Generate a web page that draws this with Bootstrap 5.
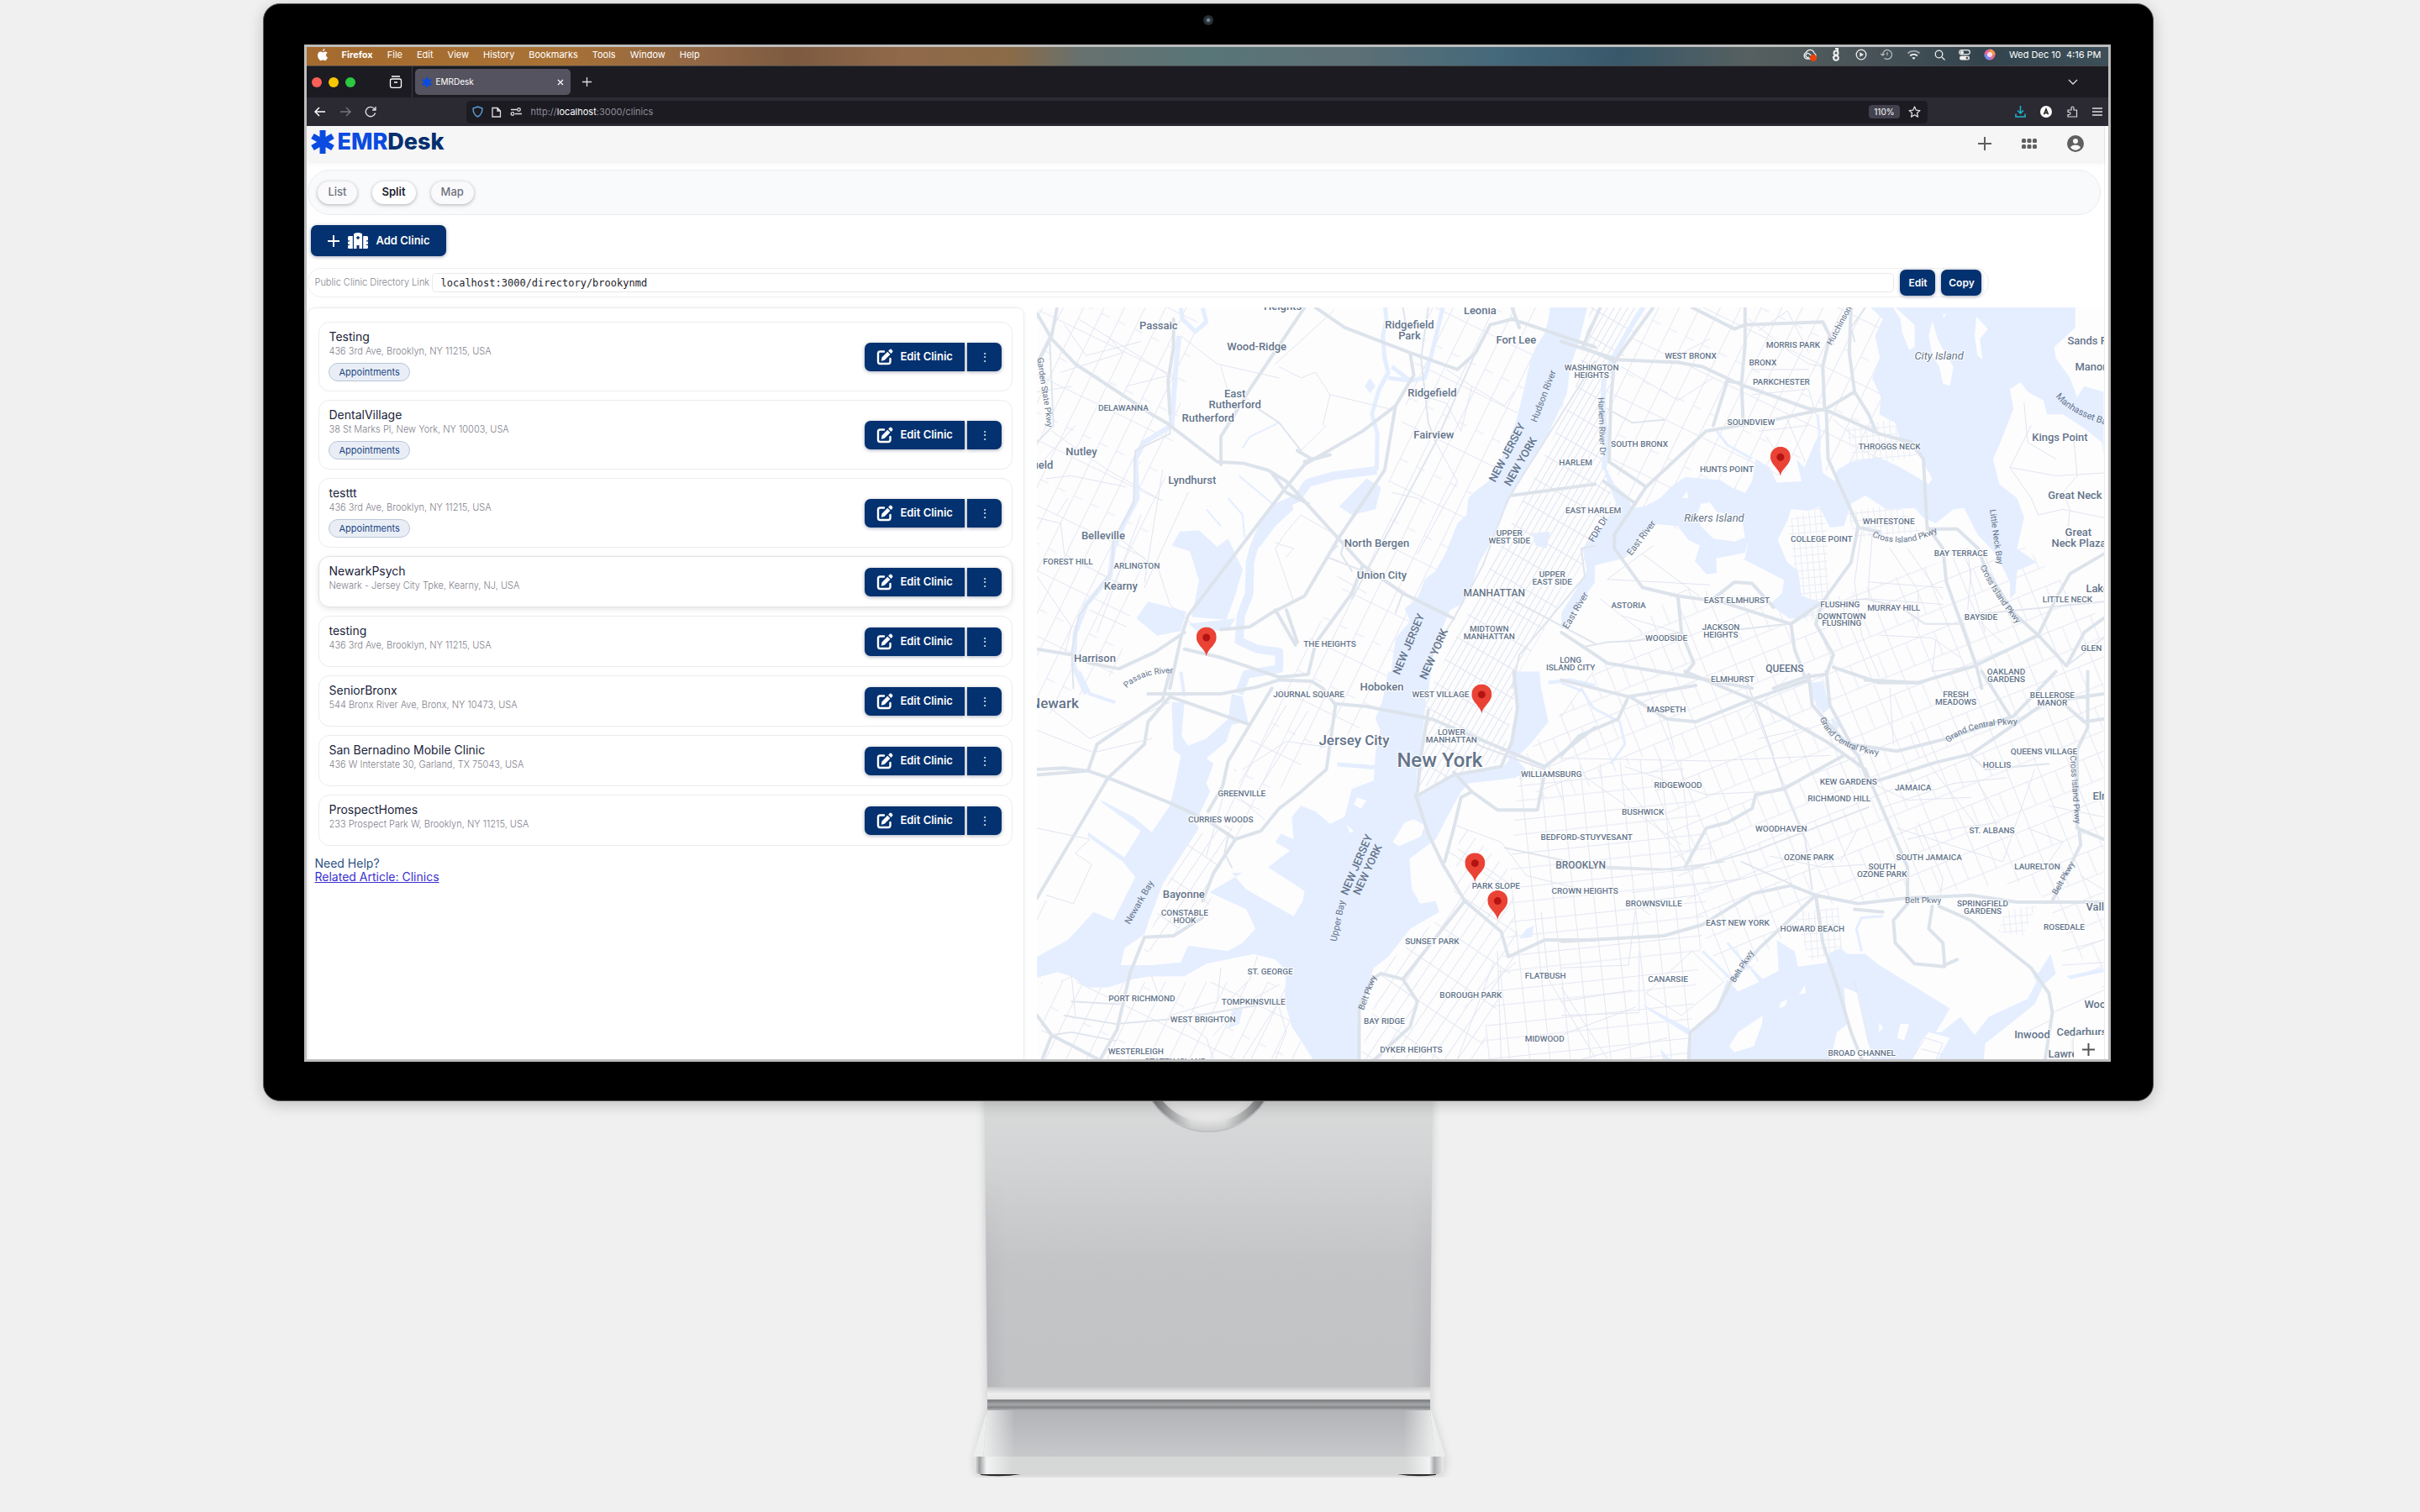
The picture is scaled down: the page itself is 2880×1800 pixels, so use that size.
<!DOCTYPE html>
<html lang="en">
<head>
<meta charset="utf-8">
<meta name="viewport" content="width=device-width, initial-scale=1">
<title>EMRDesk – Clinics</title>
<link href="https://cdn.jsdelivr.net/npm/bootstrap@5.3.0/dist/css/bootstrap.min.css" rel="stylesheet">
<style>
:root{--navy:#04316f;--line:#ebecef;--ink:#20243a}
body{background:#f0f0f0;font-family:Inter,"Liberation Sans",sans-serif;color:var(--ink);overflow-x:hidden}
button{font-family:inherit}
svg{display:block;flex:none}
.stage{padding-top:4px;padding-right:4px}
.monitor{width:78.2%;aspect-ratio:2252/1308;background:#000;border:1px solid #555;border-radius:20px;padding:48px 50px 46px 48px;position:relative;z-index:1;box-shadow:0 4px 18px rgba(0,0,0,.2)}
.cam{top:13px;left:50%;width:12px;height:12px;margin-left:-6px;background:radial-gradient(circle,#7d96a6 0 1px,#2a3438 3px,#22272a)}
.screen{border:3px solid #bdbdbd;background:#fff;overflow:hidden}
.macbar{height:23px;font-size:11px;line-height:19px;padding:0 8px 4px 12px;color:#fff;border-bottom:1px solid #4a4a4c;background:linear-gradient(90deg,#a56a2d 0,#a87135 14%,#916746 22%,#7d5a40 27%,#90694a 33%,#8b6b48 39%,#66716e 43%,#587578 50%,#5d7076 58%,#44697a 66%,#38586a 73%,#56605f 80%,#4a555a 86%,#33444d 93%,#3d4f59)}
.macbar a{color:#fff;text-decoration:none}
.macmenus{gap:17px;margin-left:15px}
.macstatus{gap:16px}
.clock{white-space:pre}
.tabs{height:37px;background:#1c1b22;padding-left:6px}
.dot{width:12px;height:12px;border-radius:50%;margin-right:8px}
.d1{background:#ff5f57}.d2{background:#f8c600}.d3{background:#2bc840}
.bare{background:none;border:0;padding:0;color:inherit;line-height:1}
.fxview{margin-left:32px}
.tabsep{width:1px;background:#3a3944;margin:0 3px 0 11px}
.newtab{margin-left:14px}
.alltabs{margin-right:36px}
.tabchip{width:185px;height:31px;background:#55535f;border-radius:5px;color:#fff;font-size:10px;padding:0 8px}
.tools{height:34px;background:#2b2a33;color:#fbfbfe;padding:0 7px 0 9px}
.toolset{gap:17px}
.urlbox{height:27px;background:#1c1b22;border-radius:5px;margin-left:106px;margin-right:104px;font-size:11px;color:#8d8c95;padding:0 8px 0 7px;gap:10px}
.urlbox b{color:#fbfbfe;font-weight:400}
.zoomchip{background:#42414d;border-radius:4px;color:#fbfbfe;font-size:10px;height:16px;padding:0 6px}
.app{min-height:0;border-right:1px solid #ececec;margin-right:4px}
.apphead{height:42px;background:#f6f6f6;padding:0 24px 0 5px;color:#5f5f5f;box-shadow:0 2px 6px rgba(0,0,0,.07);position:relative}
.headtools{gap:36px}
.brandrow{padding-bottom:5px}
.brand{font-weight:800;font-size:27px;line-height:28px;color:#06306e;text-decoration:none;margin-left:3px}
.brand span{color:#0a4be0}
.strip{height:54px;border:1px solid #e9ecf0;background:#f9fafc;border-radius:28px;margin:10px 4px 0 1px;padding:0 11px;gap:18px}
.pill{height:27px;border:0;border-radius:14px;background:#fafafc;color:#70717f;font-size:13px;font-weight:500;padding:0 12px;box-shadow:0 1px 4px rgba(0,0,0,.3)}
.pill.on{background:#fff;color:#1b1d2c;font-weight:600}
.navy{background:var(--navy);color:#fff;border:0;font-weight:600;box-shadow:0 1px 4px rgba(0,20,60,.35)}
.add{height:37px;border-radius:7px;font-size:13px;margin:12px 0 0 5px;padding:0 19px}
.linkbar{height:35px;width:2001px;max-width:94%;border:1px solid #efeff1;border-radius:16px;margin:14px 0 0 1px;padding:0 8px 0 7px}
.linkbar label{font-size:11px;color:#85868f;font-weight:300;width:140px;white-space:nowrap}
.linkbar input{height:23px;border:1px solid #e8e9ec;border-radius:5px;font:12px "DejaVu Sans Mono",monospace;color:#22232b;padding:0 9px;min-width:0}
.sq{height:31px;border-radius:7px;font-size:12px;width:42px;margin-left:7px}
.sq.wide{width:48px}
.panes{margin:12px 0 0 1px;gap:15px;min-height:0}
.listpane{width:39.9%;border:1px solid var(--line);border-bottom:0;border-radius:9px 9px 0 0;padding:16px 13px 0 12px;box-shadow:0 0 6px rgba(0,0,0,.04)}
.clinic{border:1px solid var(--line);border-radius:13px;height:61px;margin-bottom:10px;padding:0 12px 0 11px}
.clinic.tall{height:83px}
.clinic.lift{box-shadow:0 2px 7px rgba(0,0,0,.1);border-color:#dfe1e5}
.info{padding-top:7px;align-self:flex-start}
.info h2{font-size:14px;line-height:20px;margin:0;font-weight:400}
.info p{font-size:11px;line-height:14px;margin:0;font-weight:300;color:#7f818c}
.tag{font-size:11px;line-height:20px;border:1px solid #b9c6da;background:#e9eef6;color:#1c4684;border-radius:11px;padding:0 11px;margin-top:7px;display:inline-block}
.ed{height:34px;font-size:13px;border-radius:7px 0 0 7px;width:119px;gap:8px}
.more{height:34px;width:41px;border-radius:0 7px 7px 0;margin-left:3px;font-size:12px;font-weight:300}
.help{margin:13px 0 0 -5px;font-size:14px;line-height:16px;color:#2c5282}
.help a{color:#3a2fd0}
.mapbox{flex-basis:0;background:#fdfdfe;border-radius:8px 0 0 0;overflow:hidden}
.mapbox>svg{width:100%;height:100%}
.w{fill:#e4eeff}.ld{fill:#fdfdfe}
.ws{fill:none;stroke:#e4eeff;vector-effect:non-scaling-stroke;stroke-linejoin:round}
.hw,.rd,.mn{fill:none;stroke:#dde3eb;vector-effect:non-scaling-stroke;stroke-linejoin:round;stroke-linecap:round}
.hw{stroke-width:4}.rd{stroke-width:2;stroke:#e0e5ed}.mn{stroke-width:1;stroke:#e2e5f0}
.lb{font-family:Roboto,"Liberation Sans",sans-serif;fill:#64748b;text-anchor:middle;paint-order:stroke;stroke:#fff;stroke-width:2px;stroke-linejoin:round}
.tn{font-size:13px;font-weight:500}.nb{font-size:10px;font-weight:500}.bo{font-size:12px;font-weight:500}.rv{font-size:11px;stroke:none}.st{font-size:13px;stroke:none;font-weight:500}
.pk{font-size:10px}.city{font-size:17px;font-weight:500}.metro{font-size:24px}
.isl{font-style:italic;font-weight:400}
.s{text-anchor:start}
.zin{width:36px;height:29px;background:#fff;border-radius:6px 0 0 0;right:0;bottom:0;box-shadow:0 0 4px rgba(0,0,0,.2);padding-top:10px}
.stand{width:616px;height:488px;margin-top:-40px}
</style>
<script src="https://cdn.jsdelivr.net/npm/bootstrap@5.3.0/dist/js/bootstrap.bundle.min.js"></script>
</head>
<body>
<svg width="0" height="0" class="position-absolute" aria-hidden="true">
<symbol id="edit" viewBox="0 0 20 20"><path d="M9 3.5H4.5A2.500 2.500 0 0 0 2 6v9.500a2.500 2.500 0 0 0 2.500 2.500H14a2.500 2.500 0 0 0 2.500-2.500V12" fill="none" stroke="#fff" stroke-width="2.400" stroke-linecap="round"/><path d="M6.500 10.500 13.200 3.700l3.200 3.200-6.700 6.800-4 1zM14.200 2.700 15.600 1.300a1.800 1.800 0 0 1 2.600 0l.6.6a1.800 1.800 0 0 1 0 2.600l-1.400 1.400z" fill="#fff"/></symbol>
<symbol id="star" viewBox="0 0 28 28"><path d="M14 0v28M2 7l24 14M26 7l-24 14" stroke="#0a4be0" stroke-width="7"/></symbol>
<symbol id="pin" viewBox="0 0 24 35"><path d="M12 35C11 26 0 22 0 12a12 12 0 0 1 24 0C24 22 13 26 12 35z" fill="#ea4335"/><circle cx="12" cy="12.500" r="4.500" fill="#b31412"/></symbol>
</svg>
<div class="stage d-flex flex-column align-items-center">
<div class="monitor d-flex flex-column">
 <div class="cam position-absolute rounded-circle"></div>
 <div class="screen d-flex flex-column flex-grow-1">
  <nav class="macbar d-flex align-items-center" aria-label="Menu bar">
   <svg width="14" height="15" viewBox="0 0 14 15" fill="#fff"><path d="M9.500 0c.1 1.600-1.100 3-2.500 3C6.900 1.600 8.100.2 9.500 0zM7.200 4.200c.6 0 1.500-.8 2.800-.8 1 0 2 .5 2.600 1.500-2.300 1.400-1.900 4.500.4 5.400-.6 1.700-1.700 3.900-3.100 3.900-1 0-1.300-.6-2.500-.6s-1.600.6-2.500.6C3.200 14.200 1 10.600 1 7.800c0-2.700 1.700-4.200 3.400-4.200 1.200 0 2.100.6 2.800.6z"/></svg>
   <div class="macmenus d-flex"><a href="#" class="fw-bold">Firefox</a><a href="#">File</a><a href="#">Edit</a><a href="#">View</a><a href="#">History</a><a href="#">Bookmarks</a><a href="#">Tools</a><a href="#">Window</a><a href="#">Help</a></div>
   <div class="macstatus d-flex align-items-center ms-auto">
    <svg width="17" height="15" viewBox="0 0 17 15" fill="none" stroke="#eee" stroke-width="1.300"><path d="M5 12a4 4 0 0 1-.5-7.500A5 5 0 0 1 14 5a4 4 0 0 1 0 7H5zM8 10a2.500 2.500 0 1 1 0-4l4 3.500"/><circle cx="13" cy="11" r="4" fill="#e8430a" stroke="none"/></svg>
    <svg width="14" height="16" viewBox="0 0 14 16" fill="none" stroke="#eee" stroke-width="2"><circle cx="7" cy="6" r="2.500"/><circle cx="7" cy="12" r="2.800"/><path d="M6 1h3v3M3 11h2"/></svg>
    <svg width="14" height="14" viewBox="0 0 14 14"><circle cx="7" cy="7" r="5.800" fill="none" stroke="#eee" stroke-width="1.300"/><path d="M5.300 4.200v5.600L10 7z" fill="#eee"/></svg>
    <svg width="15" height="14" viewBox="0 0 15 14" fill="none" stroke="#b8bcbf" stroke-width="1.200"><path d="M2.500 7a5.500 5.500 0 1 1 2 4.200M0 6l2.500 2L5 6M8 4v4"/></svg>
    <svg width="17" height="13" viewBox="0 0 17 13" fill="none" stroke="#eee" stroke-width="1.800"><path d="M1.500 4.500a10 10 0 0 1 14 0" stroke="#9aa4a8"/><path d="M4.200 7.500a6 6 0 0 1 8.600 0"/><path d="m8.500 12-2-2.200a3 3 0 0 1 4 0z" fill="#eee" stroke="none"/></svg>
    <svg width="13" height="13" viewBox="0 0 13 13" fill="none" stroke="#eee" stroke-width="1.300"><circle cx="5.500" cy="5.500" r="4.300"/><path d="m9 9 3.500 3.500"/></svg>
    <svg width="14" height="13" viewBox="0 0 14 13"><rect x=".7" y=".7" width="12.600" height="5" rx="2.500" fill="none" stroke="#eee" stroke-width="1.300"/><circle cx="4" cy="3.200" r="2" fill="#eee"/><rect x="1" y="7.500" width="12" height="5" rx="2.500" fill="#eee"/><circle cx="10" cy="10" r="1.500" fill="#555"/></svg>
    <svg width="14" height="14" viewBox="0 0 14 14"><circle cx="7" cy="7" r="6.500" fill="#e3679b"/><path d="M7 .5A6.500 6.500 0 0 1 13.500 7L7 8z" fill="#f19a4a"/><path d="M.5 7A6.500 6.500 0 0 0 7 13.500L8 7z" fill="#6f8df5"/><circle cx="7" cy="7" r="3" fill="#f8dfe9"/></svg>
    <span class="clock">Wed Dec 10  4:16 PM</span>
   </div>
  </nav>
  <div class="tabs d-flex align-items-center flex-shrink-0">
   <span class="dot d1"></span><span class="dot d2"></span><span class="dot d3"></span>
   <button class="bare fxview" aria-label="Firefox View"><svg width="16" height="15" viewBox="0 0 16 15" fill="none" stroke="#fff" stroke-width="1.300"><rect x="1.500" y="4" width="13" height="10.300" rx="2"/><path d="M3 1h10M6 8h4"/></svg></button>
   <span class="tabsep align-self-stretch"></span>
   <div class="tabchip d-flex align-items-center"><svg width="12" height="12" class="me-1"><use href="#star"/></svg><span>EMRDesk</span><button class="bare ms-auto" aria-label="Close tab"><svg width="8" height="8" viewBox="0 0 8 8" stroke="#fff" stroke-width="1.200"><path d="m1 1 6 6M7 1 1 7"/></svg></button></div>
   <button class="bare newtab" aria-label="New tab"><svg width="11" height="11" viewBox="0 0 11 11" stroke="#ddd" stroke-width="1.300"><path d="M5.500 0v11M0 5.500h11"/></svg></button>
   <button class="bare alltabs ms-auto" aria-label="All tabs"><svg width="12" height="8" viewBox="0 0 12 8" fill="none" stroke="#ddd" stroke-width="1.300"><path d="m1 1 5 5 5-5"/></svg></button>
  </div>
  <div class="tools d-flex align-items-center flex-shrink-0">
   <button class="bare" aria-label="Back"><svg width="14" height="12" viewBox="0 0 14 12" fill="none" stroke="#fff" stroke-width="1.500"><path d="M13 6H1.500M6 1 1 6l5 5"/></svg></button>
   <button class="bare ms-3" aria-label="Forward"><svg width="14" height="12" viewBox="0 0 14 12" fill="none" stroke="#77767f" stroke-width="1.400"><path d="M1 6h11.500M8 1l5 5-5 5"/></svg></button>
   <button class="bare ms-3" aria-label="Reload"><svg width="15" height="14" viewBox="0 0 15 14" fill="none" stroke="#ddd" stroke-width="1.400"><path d="M12.500 8.500A5.700 5.700 0 1 1 11 3l1.500 1.500M13 1v4H9"/></svg></button>
   <div class="urlbox d-flex align-items-center flex-grow-1">
    <svg width="13" height="14" viewBox="0 0 13 14" fill="none" stroke="#5a9fd6" stroke-width="1.400"><path d="M6.500 1 12 3c0 5-1.500 8-5.500 10C2.500 11 1 8 1 3z"/></svg>
    <svg width="12" height="13" viewBox="0 0 12 13" fill="none" stroke="#ddd" stroke-width="1.300"><path d="M1 1.500h6L10.500 5v7H1zM7 1v4h4"/></svg>
    <svg width="14" height="10" viewBox="0 0 14 10" fill="none" stroke="#ddd" stroke-width="1.300"><path d="M1 2.500h7M6 7.500h8"/><circle cx="10.500" cy="2.500" r="1.800"/><circle cx="3" cy="7.500" r="1.800"/></svg>
    <div class="flex-grow-1" role="textbox" contenteditable="true" aria-label="Address">http://<b>localhost</b>:3000/clinics</div>
    <button class="bare zoomchip">110%</button>
    <button class="bare" aria-label="Bookmark"><svg width="15" height="14" viewBox="0 0 15 14" fill="none" stroke="#ddd" stroke-width="1.300" stroke-linejoin="round"><path d="m7.500 1 1.900 4.200 4.500.4-3.400 3 1 4.500-4-2.400-4 2.400 1-4.500-3.400-3 4.500-.4z"/></svg></button>
   </div>
   <div class="toolset d-flex align-items-center">
    <button class="bare" aria-label="Downloads"><svg width="13" height="14" viewBox="0 0 13 14" fill="none" stroke="#1fb6cf" stroke-width="1.500"><path d="M6.500 0v9M3 5.500 6.500 9 10 5.500M1 9.500V13h11V9.500"/></svg></button>
    <button class="bare" aria-label="Account"><svg width="14" height="14" viewBox="0 0 14 14"><circle cx="7" cy="7" r="7" fill="#fff"/><path d="M4.500 10.300 7 4l2.500 6.300M5.300 8.500h3.400" fill="none" stroke="#222" stroke-width="1.600"/></svg></button>
    <button class="bare" aria-label="Extensions"><svg width="14" height="14" viewBox="0 0 14 14" fill="none" stroke="#ddd" stroke-width="1.200"><path d="M2 5h4V2.500a1.500 1.500 0 0 1 3 0V5h3.500v8H2v-2.500h1.500a1.500 1.500 0 0 0 0-3H2z"/></svg></button>
    <button class="bare" aria-label="Menu"><svg width="12" height="10" viewBox="0 0 12 10" stroke="#ddd" stroke-width="1.300"><path d="M0 1h12M0 5h12M0 9h12"/></svg></button>
   </div>
  </div>
  <div class="app d-flex flex-column flex-grow-1">
   <header class="apphead d-flex align-items-center flex-shrink-0">
    <div class="brandrow d-flex align-items-center"><svg width="28" height="28"><use href="#star"/></svg><a class="brand" href="#"><span>EMR</span>Desk</a></div>
    <div class="headtools d-flex align-items-center ms-auto">
     <button class="bare" aria-label="Add"><svg width="16" height="16" viewBox="0 0 16 16" stroke="#5f5f5f" stroke-width="2"><path d="M8 0v16M0 8h16"/></svg></button>
     <button class="bare" aria-label="Apps"><svg width="18" height="12" viewBox="0 0 18 12" fill="#5f5f5f"><rect width="5" height="5" rx="1.500"/><rect x="6.500" width="5" height="5" rx="1.500"/><rect x="13" width="5" height="5" rx="1.500"/><rect y="7" width="5" height="5" rx="1.500"/><rect x="6.500" y="7" width="5" height="5" rx="1.500"/><rect x="13" y="7" width="5" height="5" rx="1.500"/></svg></button>
     <button class="bare" aria-label="Profile"><svg width="20" height="20" viewBox="0 0 20 20"><circle cx="10" cy="10" r="10" fill="#5f5f5f"/><circle cx="10" cy="7" r="3" fill="#f6f6f6"/><path d="M4 14.500c1.500-4 10.500-4 12 0a7.200 7.200 0 0 1-12 0z" fill="#f6f6f6"/></svg></button>
    </div>
   </header>
   <div class="strip d-flex align-items-center flex-shrink-0"><button class="pill">List</button><button class="pill on">Split</button><button class="pill">Map</button></div>
   <div class="flex-shrink-0"><button class="navy add d-flex align-items-center">
    <svg width="16" height="16" viewBox="0 0 16 16" stroke="#fff" stroke-width="2" class="me-2"><path d="M8 1v14M1 8h14"/></svg>
    <svg width="26" height="20" viewBox="0 0 26 20" fill="#fff" class="me-2"><path fill-rule="evenodd" d="M8 2q0-1 1-1.200L12 0h2l3 .8q1 .2 1 1.200v17h-3.500v-4h-3v4H8zM12.300 4v1.300H11v1.500h1.300V8h1.500V6.800h1.300V5.300h-1.300V4zM6.800 4v15H2.500A1.500 1.500 0 0 1 1 17.500V15h2v-1.200H1V10.500h2V9.300H1V5.500A1.500 1.500 0 0 1 2.500 4zM19.200 4v15h4.300a1.500 1.500 0 0 0 1.500-1.500V15h-2v-1.200h2v-3.300h-2V9.300h2V5.500A1.500 1.500 0 0 0 23.500 4z"/></svg>
    Add Clinic</button></div>
   <div class="linkbar d-flex align-items-center flex-shrink-0"><label for="dir" class="flex-shrink-0">Public Clinic Directory Link</label><input id="dir" class="flex-grow-1" value="localhost:3000/directory/brookynmd"><button class="navy sq">Edit</button><button class="navy sq wide">Copy</button></div>
   <main class="panes d-flex flex-grow-1">
    <section class="listpane flex-shrink-0">
     <article class="clinic tall d-flex align-items-center"><div class="info me-auto"><h2>Testing</h2><p>436 3rd Ave, Brooklyn, NY 11215, USA</p><span class="tag">Appointments</span></div><button class="navy ed d-flex align-items-center justify-content-center"><svg width="20" height="20"><use href="#edit"/></svg>Edit Clinic</button><button class="navy more" aria-label="More">⋮</button></article>
     <article class="clinic tall d-flex align-items-center"><div class="info me-auto"><h2>DentalVillage</h2><p>38 St Marks Pl, New York, NY 10003, USA</p><span class="tag">Appointments</span></div><button class="navy ed d-flex align-items-center justify-content-center"><svg width="20" height="20"><use href="#edit"/></svg>Edit Clinic</button><button class="navy more" aria-label="More">⋮</button></article>
     <article class="clinic tall d-flex align-items-center"><div class="info me-auto"><h2>testtt</h2><p>436 3rd Ave, Brooklyn, NY 11215, USA</p><span class="tag">Appointments</span></div><button class="navy ed d-flex align-items-center justify-content-center"><svg width="20" height="20"><use href="#edit"/></svg>Edit Clinic</button><button class="navy more" aria-label="More">⋮</button></article>
     <article class="clinic lift d-flex align-items-center"><div class="info me-auto"><h2>NewarkPsych</h2><p>Newark - Jersey City Tpke, Kearny, NJ, USA</p></div><button class="navy ed d-flex align-items-center justify-content-center"><svg width="20" height="20"><use href="#edit"/></svg>Edit Clinic</button><button class="navy more" aria-label="More">⋮</button></article>
     <article class="clinic d-flex align-items-center"><div class="info me-auto"><h2>testing</h2><p>436 3rd Ave, Brooklyn, NY 11215, USA</p></div><button class="navy ed d-flex align-items-center justify-content-center"><svg width="20" height="20"><use href="#edit"/></svg>Edit Clinic</button><button class="navy more" aria-label="More">⋮</button></article>
     <article class="clinic d-flex align-items-center"><div class="info me-auto"><h2>SeniorBronx</h2><p>544 Bronx River Ave, Bronx, NY 10473, USA</p></div><button class="navy ed d-flex align-items-center justify-content-center"><svg width="20" height="20"><use href="#edit"/></svg>Edit Clinic</button><button class="navy more" aria-label="More">⋮</button></article>
     <article class="clinic d-flex align-items-center"><div class="info me-auto"><h2>San Bernadino Mobile Clinic</h2><p>436 W Interstate 30, Garland, TX 75043, USA</p></div><button class="navy ed d-flex align-items-center justify-content-center"><svg width="20" height="20"><use href="#edit"/></svg>Edit Clinic</button><button class="navy more" aria-label="More">⋮</button></article>
     <article class="clinic d-flex align-items-center"><div class="info me-auto"><h2>ProspectHomes</h2><p>233 Prospect Park W, Brooklyn, NY 11215, USA</p></div><button class="navy ed d-flex align-items-center justify-content-center"><svg width="20" height="20"><use href="#edit"/></svg>Edit Clinic</button><button class="navy more" aria-label="More">⋮</button></article>
     <div class="help">Need Help?<br><a href="#">Related Article: Clinics</a></div>
    </section>
    <section class="mapbox flex-grow-1 position-relative" aria-label="Map">
<svg viewBox="1235 366 1271 896" preserveAspectRatio="xMidYMid slice">
<defs>
<pattern id="ga" width="30" height="7" patternUnits="userSpaceOnUse" patternTransform="rotate(-60)"><path d="M0 .5H30M.5 0V7" stroke="#e0e4f0" stroke-width="1" fill="none"/></pattern>
<pattern id="gb" width="24" height="40" patternUnits="userSpaceOnUse" patternTransform="rotate(-6)"><path d="M0 .5H24M.5 0V40M0 18H24" stroke="#e4e7f1" fill="none"/></pattern>
<pattern id="gc" width="44" height="13" patternUnits="userSpaceOnUse" patternTransform="rotate(-56)"><path d="M0 .5H44M.5 0V13" stroke="#e4e7f1" fill="none"/></pattern>
<pattern id="gd" width="36" height="52" patternUnits="userSpaceOnUse" patternTransform="rotate(-22)"><path d="M0 .5H36M.5 0V52M0 30H36M18 0V30" stroke="#e6e8f2" fill="none"/></pattern>
<pattern id="ge" width="70" height="22" patternUnits="userSpaceOnUse" patternTransform="rotate(-64)"><path d="M0 .5H70M.5 0V22M30 0V11" stroke="#e6e8f2" fill="none"/></pattern>
<pattern id="gf" width="7" height="9" patternUnits="userSpaceOnUse" patternTransform="rotate(-5)"><path d="M0 .5H7M.5 0V9" stroke="#e9ecf4" fill="none"/></pattern>
</defs>
<rect x="1235" y="366" width="1271" height="896" fill="#fdfdfe"/>
<!-- street grids -->
<path fill="url(#ga)" d="M1895 366 1875 470 1690 850 1690 940 1790 905 1810 800 1920 610 1910 480 1960 366z"/>
<path fill="url(#ge)" d="M1235 366H1430L1390 560 1330 800 1235 860zM1700 366H1840L1780 600 1650 850 1560 900 1470 1000 1450 950 1560 760 1640 640zM1240 1170H1530L1580 1262H1240z"/>
<path fill="url(#gc)" d="M1740 980 1800 1040 1810 1130 1760 1262H1620L1650 1150 1730 1080zM1410 1000 1470 980 1440 1080 1360 1140z"/>
<path fill="url(#gb)" d="M1810 920 2000 900 2040 1010 2010 1262H1760L1800 1100 1800 1020z"/>
<path fill="url(#gd)" d="M1800 920 1900 800 2000 700 2160 720 2400 640 2506 740V1180L2420 1050 2160 1080 2060 1180 2000 1050 1960 900 1850 960z"/>
<path fill="url(#ge)" d="M1900 500 1960 366H2250L2240 560 2130 560 2000 630 1950 620z"/>
<path fill="url(#gf)" d="M2130 620 2175 600 2180 740 2145 740zM2200 610 2260 600 2290 635 2210 640zM2200 510 2250 500 2290 540 2210 560zM2140 1090 2190 1080 2195 1135 2155 1145zM2390 1085 2425 1080 2410 1115 2380 1110z"/>
<!-- water -->
<g transform="translate(1220 360) scale(.4337 .33333)">
<path class="w" d="M1447 0 1440 60 1430 110 1405 160 1390 210 1375 300 1360 380 1350 430 1310 560 1275 640 1235 680 1220 700 1215 760 1190 790 1160 890 1130 960 1100 990 1080 1060 1045 1095 1060 1140 1020 1200 1010 1300 1000 1400H1110L1120 1280 1150 1160 1170 1100 1200 1080 1230 1010 1250 930 1290 840 1320 740 1340 690 1380 600 1430 500 1450 440 1490 330 1500 230 1524 140 1550 0z"/>
<path class="w" d="m480 815 50 60 30-30 40 110-20 90-25 90-95-10 20-130-25-105-50-20 22-50zM340 1070 445 1105 430 1175 365 1192 308 1130zM940 630 980 660 965 740 900 760 865 730zM950 270 965 300 950 325 935 300zM1395 825 1445 820 1435 880 1405 870zM450 1150 580 1130 560 1170 480 1180z"/>
<path class="ws" stroke-width="5" d="M990 0 995 60 985 120 990 200 1000 250 975 310 955 400 970 470 968 600M430 20 435 60 470 105 500 70 490 20M1010 230 1060 280 1100 270 1120 180 1150 18M1000 270 1060 280"/>
<path class="ws" stroke-width="10" d="M968 600 850 620 780 645 750 700 700 730 655 800 630 880 620 930 618 1040 595 1120 590 1210 640 1240 700 1250 700 1310 610 1330 590 1400"/>
<path class="w" d="M680 740 730 710 740 740 690 800 650 870 620 900 640 830z"/>
<path class="ws" stroke-width="6" d="M425 120 415 250 405 440 330 500 305 560 310 700 270 800 245 880 235 980 170 1080 140 1180 135 1300 170 1400"/>
<path class="ws" stroke-width="2" d="M600 520 620 480 700 430M560 700 600 760 605 840M590 620 700 740M500 740 540 800"/>
</g>
<g transform="translate(1860 360) scale(.4209 .33333)">
<path class="w" d="M860 0 910 60 888 120 902 200 880 270 905 340 900 400 945 430 960 500 1010 540 1050 630 1040 650 960 590 900 555 820 570 780 600 775 640 740 610 728 480 718 500 688 590 665 560 680 640 610 645 590 590 550 560 540 640 520 682 480 660 450 635 350 625 310 660 280 700 235 730 200 735 185 690 150 650 130 600 112 560 130 640 155 720 130 780 60 880 72 960 40 1030 0 1110V1170L60 1065 95 1000 95 940 180 915 230 830 262 792 330 800 360 850 392 870 378 925 410 972 440 968 438 915 500 908 630 993 625 1040 590 1080 645 1130 690 1130 730 1070 680 1050 670 960 640 930 612 850 640 780 650 740 700 745 730 730 760 805 800 800 820 720 860 690 920 740 1000 735 1025 770 1060 790 1110 740 1140 735 1178 830 1230 900 1270 1000 1270 1060 1285 1040 1290 960 1345 930 1290 880 1310 770 1290 700 1240 650 1222 560 1240 510 1280 380 1270 310 1300 285 1320 320 1365 350 1375 400 1420 400 1480 450 1530 500 1535 545V320L1480 300 1460 340 1440 270 1400 200 1395 160 1455 90 1455 0z"/>
<path class="w" d="M0 18H70L50 130 20 200 10 330 0 390z"/>
<path class="ws" stroke-width="6" d="M240 0 200 80 150 190 120 260 118 400 130 500 120 600"/>
<path class="ws" stroke-width="3" d="M440 460 470 510 540 560M725 400 730 460 730 520"/>
<path class="ld" d="M930 0 1000 80 1000 160 985 170 965 110 960 60zM1050 65 1065 130 1085 180 1110 230 1100 298 1080 290 1070 230 1050 190 1040 120zM1175 50 1208 95 1185 130 1192 205 1178 190 1170 120zM355 675 360 700 342 700zM395 720 420 715 440 750 510 765 520 840 490 855 430 845 395 800 385 760zM440 915 520 895 530 850 520 915 470 940zM1080 40 1090 45 1082 55z"/>
</g>
<g transform="translate(1220 800) scale(.4337 .33333)">
<path class="w" d="M1000 0 985 100 965 170 978 210 965 290 960 390 900 420 880 520 840 545 800 500 760 480 735 520 740 600 705 580 690 610 730 640 670 700 770 785 765 820 740 875 610 780 570 720 600 720 520 780 510 790 610 850 635 920 600 970 560 1000 450 980 430 1040 350 1050 265 1050 275 990 330 940 340 900 380 760 440 640 480 560 470 540 510 430 500 400 520 330 500 310 555 250 570 190 615 180 600 90 570 80 560 170 500 240 450 265 432 230 440 110 405 110 410 280 430 300 415 400 400 480 350 575 300 520 210 460 215 470 320 570 275 665 175 575 175 590 270 680 305 735 245 890 190 860 120 960 35 1020V1095L90 1075 130 1090 170 1130 230 1130 300 1100 350 1090 440 1090 500 1045 630 1010 690 1030 720 1070 715 1180 735 1270 800 1400H920L915 1200 950 1100 960 1060 1000 1020 1060 920 1140 860 1130 820 1090 830 1065 780 1058 670 1130 600 1170 500 1200 430 1220 400 1350 380 1378 350 1350 310 1390 260 1440 180 1420 60 1415 0H1350L1345 60 1355 130 1340 200 1330 320 1310 345 1200 360 1090 445 1075 440 1080 340 1090 290 1100 150 1110 0z"/>
<path class="w" d="M1380 920 1400 910 1395 950 1360 955zM570 1215 600 1205 590 1260 560 1275zM860 325 965 335 960 350 860 340z"/>
<path class="ws" stroke-width="4" d="M150 0 180 80 250 110M1568 50 1500 30 1440 40M430 0 440 90"/>
<path class="ld" d="M1045 540 1070 528 1100 550 1090 590 1030 625 1012 610zM915 450 940 462 925 490 905 475zM885 548 905 570 895 577zM640 710 690 740 770 790 760 820 700 790 650 740zM1070 770 1085 830 1100 800z"/>
</g>
<g transform="translate(1860 800) scale(.4209 .33333)">
<path class="w" d="M360 1400 372 1290 440 1200 470 1100 500 1145 560 1110 515 1030 570 1100 615 1070 610 960 640 985 660 1000 670 1055 750 1042 760 1005 790 990 810 1010 860 1010 900 1050 1100 1205 1060 1290 1075 1290 1130 1235 1170 1300 1210 1235 1320 1170 1345 1110 1330 1070 1290 1020 1350 1080 1385 1010 1400 1080 1365 1120 1340 1190 1270 1260 1200 1330 1195 1400z"/>
<path class="w" d="M230 1190 365 1280 360 1300 240 1205zM280 1350 320 1400H290zM705 40 740 35 760 130 740 150 710 90zM765 165 790 190 770 230zM1430 1090 1535 1060V1075L1440 1100z"/>
<path class="ws" stroke-width="3" d="M0 40 60 70 90 130 165 180 180 260 140 330M850 1000 835 920 850 880 910 875M400 1000 480 1100M470 970 530 1060"/>
<path class="ld" d="M570 1230 568 1260 545 1340 490 1362 475 1340 500 1290zM690 1120 692 1150 672 1155zM640 1170 635 1195 617 1205 620 1185zM800 1130 840 1150 870 1330 880 1400H760L780 1290 810 1260zM960 1260 985 1260 970 1320 950 1310zM1040 1290 1100 1310 1060 1400H990L1020 1320zM900 1255 912 1275 898 1290z"/>
<path class="mn" d="M1000 1370 1030 1310 1080 1330 1060 1390M1020 1350 1080 1370M830 1110 840 1160 870 1330"/>
</g>
<!-- roads -->
<g transform="translate(1220 360) scale(.4337 .33333)">
<path class="hw" d="M35 40 75 130 140 220 350 400 390 430 530 570 600 575 670 600 720 640 860 840 930 940 1040 1040 1180 1130M90 18 75 120 35 220M410 60 410 160 395 280 400 400M800 18 880 90 1060 180 1190 240 1240 180 1280 80 1340 60 1568 160M1340 18 1360 90M1060 180 1070 260 1020 370 990 600 860 850 770 1050 680 1110 620 1160 540 1170M1020 370 930 460 770 580 720 660 450 1120 430 1200 400 1380M770 18 620 310 540 480 540 580M680 610 720 680 780 720M750 530 790 560 840 545 770 570M930 940 900 1040 800 1220 780 1330 700 1340 540 1270 440 1240M35 1240 130 1260 180 1290 260 1310 360 1250 440 1180M690 1100 745 1225M720 1100 750 1215M1568 650 1340 690"/>
<path class="rd" d="M400 400 400 470 305 530 300 720 245 850 240 960 150 1120 130 1250 135 1380M1050 90 1040 18M1110 18 1090 200 1110 430 1130 500 1000 820 900 1060M1240 180 1130 500M1568 870 1530 880 1540 980 1360 1260 1340 1380M1180 1130 1260 940 1330 700 1568 210M860 870 830 910 930 960M880 850 870 900 900 960M1180 1130 1110 1280M1040 1040 1020 1110M1350 1070 1568 1220M35 500 80 440 70 140M630 370 700 430 760 530"/>
<path class="mn" d="M35 320 130 300M75 460 230 600 380 710M60 630 130 620 280 660M140 440 35 590M110 80 170 190 320 140M150 60 300 180 420 280M230 120 270 180 100 250M280 300 400 260M430 120 530 220 700 270M540 230 560 320 620 350M700 230 760 270 800 250 840 330 820 440M690 220 850 30M840 330 1000 380M830 440 760 530M450 680 330 1020M380 600 330 1000M240 820 370 960 400 1080 470 1160M320 760 200 1180M35 770 100 790 110 900 280 1020M860 980 940 1040M690 880 720 820 760 760 840 820M690 880 740 1070M690 860 740 880 720 910M1130 500 1190 640 1080 900M1160 240 1230 300 1200 460M1230 300 1320 370 1345 320M1010 680 1080 700 1100 720M1110 340 1160 360 1200 460M120 700 90 760M35 980 130 1160 110 1260M180 1100 280 1160"/>
</g>
<g transform="translate(1860 360) scale(.4209 .33333)">
<path class="hw" d="M0 140 160 205 330 215 400 230 500 290 700 380 750 385 900 470 990 500 1025 560 1035 800 1080 880 1090 1000 1175 1300 1190 1380M110 18 60 160 150 210 140 350 135 570 240 660 410 460 620 415 750 380 830 320 815 180 820 18M750 385 755 560 840 800 820 930 740 1070 650 1150 450 1070 330 1050 230 1020 150 880 150 830 240 660M520 18 520 150 510 290 515 440M370 18 490 95 520 80 740 70 760 120 740 230 745 380M510 290 470 280 430 440M830 320 870 400 890 460M150 210 260 18M840 805 900 820M1035 810 1120 810 1180 880 1200 950 1280 1110 1350 1190 1430 1300M650 1150 660 1240 690 1340 600 1380M740 1070 720 1150 770 1260 750 1330 690 1340M770 1305 900 1360 1010 1360 1170 1300 1350 1190 1400 1060 1440 970 1535 900M1430 1300 1480 1180 1535 1130M120 640 210 720M430 1060 490 1000 540 1005 600 1090M0 1180 60 1230 130 1290 370 1340 540 1380M330 1050 340 1180 375 1290 350 1330"/>
<path class="rd" d="M70 1230 110 1220 130 1215 210 1210 340 1180M500 1170 640 1150M740 1080 860 1060 960 1090 1030 1150 1140 1150M1140 1120 1535 1070M860 20 820 90 830 140M130 380 200 430 290 420M1430 1300 1535 1200"/>
<path class="mn" d="M530 60 640 170 700 220 740 230M540 240 700 240M560 100 640 30 700 180M170 230 330 350 430 270M300 210 420 130M540 330 700 310 720 400M560 460 700 440M580 480 620 560M640 420 690 570M770 420 830 480M850 820 830 1000 850 1190 900 1340M880 830 870 1000 1080 1020M930 880 1010 1030 1010 1160M980 880 1080 1060M1100 900 1150 880 1160 1000 1200 1180M870 1000 870 1060 1080 1080M1130 880 1160 960 1150 1100 1250 1220M900 1190 1050 1200 1130 1270M1060 1210 1050 1320 1170 1300M1310 360 1320 500 1400 560M1330 440 1270 590 1330 700 1350 760M1450 480 1460 620 1420 680 1440 740M1350 760 1420 740 1535 770M1440 740 1430 860 1535 880M1270 590 1400 620 1535 610M260 870 130 990 420 1010M230 900 390 1050M170 1120 330 1180M110 1060 230 1180"/>
</g>
<g transform="translate(1220 800) scale(.4337 .33333)">
<path class="hw" d="M35 350 110 345 175 355 230 380 400 470 500 530 580 600 650 570 700 490 760 430 830 350 855 120 820 60 790 35 700 30 640 55 540 80 340 80M35 370 175 355 200 260 380 100 400 0M230 380 330 260 340 180 400 90M230 380 35 810M400 90 620 190 680 60M620 190 560 320 545 410 505 500M580 600 520 720 490 820M855 115 940 125 1120 170 1430 340 1568 200M1075 440 1110 580 1150 690 1210 820 1310 930 1330 1020 1430 960 1568 960M1085 440 1180 370 1310 340 1340 250 1355 130 1345 0M1110 140 1090 300 1080 430M1180 360 1230 430 1300 495 1410 495 1430 360M1230 430 1200 450 1180 560 1155 680M1210 820 1040 1100 980 1080 955 1100 920 1200 920 1385M1040 1100 1080 1180 1060 1270 960 1390M490 880 410 945 330 950 290 1080 255 1280 210 1385M35 1230 75 1300 200 1385M75 1300 50 1385"/>
<path class="rd" d="M75 1300 130 1290 250 1320M560 590 550 650 570 700M130 1180 260 1190M110 1230 250 1260 430 1240 700 1180M1160 200 1260 270 1430 350M1320 630 1568 700"/>
<path class="mn" d="M35 210 190 290 350 240M60 120 180 240 400 110M720 120 590 400M780 140 640 430M830 270 720 250 600 350M590 450 660 530M550 430 500 660M35 560 180 600 140 650 185 690 135 830 60 800M60 820 30 900M100 1110 130 1090 140 1230M350 1090 370 1160 400 1180M640 1020 620 1100 560 1180M700 1120 600 1190 520 1300M540 1060 530 1180 400 1230M430 1240 500 1310 520 1385M700 1180 660 1260 600 1385M700 1200 720 1290 690 1385M1185 550 1310 610 1380 730 1568 790M1160 640 1310 760M1300 1000 1310 1380M1420 860 1440 1100 1568 1380M1350 1040 1210 1200M1290 1040 1190 1385"/>
</g>
<g transform="translate(1860 800) scale(.4209 .33333)">
<path class="hw" d="M0 30 190 90 380 50M190 90 160 170 50 230 0 300M200 95 300 170 380 180 480 130 540 100 700 30M350 0 540 100 750 250 860 350 980 700 980 800M700 10 710 120 780 220 840 300M750 0 760 120 820 260 950 285 1090 240 1280 160 1400 0M840 300 870 400 1060 325 1160 295 1270 200 1370 110 1535 80M860 30 1010 40M1190 0 1270 160M1400 90 1480 180 1535 170M1490 0 1490 200 1460 280 1460 560 1535 600M1465 560 1470 620 1390 820M800 300 700 370 630 420 550 440 540 490 470 540 410 560 350 700M0 965 290 945 400 905 540 795 650 765 720 800 840 830 980 810 1160 800 1290 825 1535 825M720 800 560 990 480 1110 440 1210 365 1290 360 1385M720 800 740 970 780 1120 820 1290 850 1385M830 850 910 860M980 830 940 890 945 970 1000 1045 1085 1055M1050 840 1040 920 1080 970 1085 1050 1120 1030M1070 840 1160 890 1330 1060 1380 1150 1390 1220 1370 1385"/>
<path class="rd" d="M0 690 350 710 550 640 870 485M0 700 280 710 460 680M510 680 650 760M600 310 630 420 690 600 710 780M1460 560 1460 440M1160 300 1200 350 1380 330M520 20 600 300"/>
<path class="mn" d="M0 310 420 320 760 300M180 340 410 440 560 430M60 370 340 620M170 390 350 680M90 0 0 160M300 180 320 280M560 240 700 200M640 20 520 170M930 60 940 260M990 180 1040 330 1180 560M880 400 980 460 1160 450M900 490 1110 400 1260 380M950 560 1250 680 1340 350M980 600 1120 560 1240 540M1240 520 1180 400M400 780 660 690M200 790 520 740M180 830 380 800M250 870 200 820M590 660 740 700 860 690M790 680 840 560M1010 540 1080 740 1070 830M1320 560 1420 610 1380 680M1535 520 1380 480M1470 730 1535 780M0 1060 190 1050 210 850M0 1180 200 1140M0 1230 220 1220 220 1000M240 1150 340 1230 460 1110 370 1000 240 1150M130 1385 0 1130M60 1385 300 1310M0 1300 210 1200M1390 1220 1535 1140M1420 1050 1535 1040M1300 1300 1380 1250M1420 1000 1535 960"/>
</g>
<!-- towns -->
<g class="lb tn"><text x="1380" y="392">Passaic</text><text x="1528" y="369">Heights</text><text x="1763" y="374">Leonia</text><text x="1497" y="417">Wood-Ridge</text><text x="1679" y="391">Ridgefield</text><text x="1679" y="404">Park</text><text x="1806" y="409">Fort Lee</text><text x="1471" y="473">East</text><text x="1471" y="486">Rutherford</text><text x="1439" y="502">Rutherford</text><text x="1706" y="472">Ridgefield</text><text x="1708" y="522">Fairview</text><text x="1288" y="542">Nutley</text><text x="1223" y="558">Bloomfield</text><text x="1420" y="576">Lyndhurst</text><text x="1314" y="642">Belleville</text><text x="1335" y="702">Kearny</text><text x="1640" y="651">North Bergen</text><text x="1646" y="689">Union City</text><text x="1304" y="789">Harrison</text><text x="1646" y="823">Hoboken</text><text x="1410" y="1070">Bayonne</text><text class="s" x="2463" y="410">Sands Point</text><text class="s" x="2472" y="441">Manorhaven</text><text x="2454" y="525">Kings Point</text><text x="2472" y="594">Great Neck</text><text x="2476" y="638">Great</text><text class="s" x="2444" y="651">Neck Plaza</text><text class="s" x="2485" y="705">Lake Success</text><text class="s" x="2493" y="953">Elmont</text><text class="s" x="2485" y="1085">Valley Stream</text><text class="s" x="2483" y="1201">Woodmere</text><text x="2421" y="1237">Inwood</text><text class="s" x="2450" y="1234">Cedarhurst</text><text class="s" x="2440" y="1260">Lawrence</text>
<text class="isl" x="2310" y="428">City Island</text><text class="isl" x="2042" y="621">Rikers Island</text></g>
<g class="lb city"><text x="1256" y="844">Newark</text><text x="1613" y="888">Jersey City</text><text class="metro" x="1715" y="914">New York</text></g>
<g class="lb bo"><text x="1780" y="710">MANHATTAN</text><text x="2126" y="801">QUEENS</text><text x="1883" y="1035">BROOKLYN</text></g>
<!-- neighbourhoods -->
<g class="lb nb"><text x="1338" y="489">DELAWANNA</text><text x="1272" y="672">FOREST HILL</text><text x="1354" y="677">ARLINGTON</text><text x="1584" y="771">THE HEIGHTS</text><text x="1896" y="441">WASHINGTON</text><text x="1896" y="450">HEIGHTS</text><text x="1877" y="554">HARLEM</text><text x="1898" y="611">EAST HARLEM</text><text x="1798" y="638">UPPER</text><text x="1798" y="647">WEST SIDE</text><text x="1849" y="687">UPPER</text><text x="1849" y="696">EAST SIDE</text><text x="1774" y="753">MIDTOWN</text><text x="1774" y="762">MANHATTAN</text><text x="1871" y="790">LONG</text><text x="1871" y="799">ISLAND CITY</text><text x="1716" y="831">WEST VILLAGE</text><text x="1559" y="831">JOURNAL SQUARE</text><text x="1729" y="876">LOWER</text><text x="1729" y="885">MANHATTAN</text><text x="1848" y="926">WILLIAMSBURG</text><text x="1479" y="949">GREENVILLE</text><text x="1454" y="980">CURRIES WOODS</text><text x="1890" y="1001">BEDFORD-STUYVESANT</text><text x="1782" y="1059">PARK SLOPE</text><text x="1888" y="1065">CROWN HEIGHTS</text><text x="1411" y="1091">CONSTABLE</text><text x="1411" y="1100">HOOK</text><text x="1706" y="1125">SUNSET PARK</text><text x="1841" y="1166">FLATBUSH</text><text x="1513" y="1161">ST. GEORGE</text><text x="1752" y="1189">BOROUGH PARK</text><text x="1360" y="1193">PORT RICHMOND</text><text x="1493" y="1197">TOMPKINSVILLE</text><text x="1433" y="1218">WEST BRIGHTON</text><text x="1649" y="1220">BAY RIDGE</text><text x="1840" y="1241">MIDWOOD</text><text x="1681" y="1254">DYKER HEIGHTS</text><text x="1353" y="1256">WESTERLEIGH</text><text x="1400" y="1268">STATEN ISLAND</text>
<text x="2014" y="427">WEST BRONX</text><text x="2136" y="414">MORRIS PARK</text><text x="2100" y="435">BRONX</text><text x="2122" y="458">PARKCHESTER</text><text x="2086" y="506">SOUNDVIEW</text><text x="1953" y="532">SOUTH BRONX</text><text x="2057" y="562">HUNTS POINT</text><text x="2251" y="535">THROGGS NECK</text><text x="2250" y="624">WHITESTONE</text><text x="2170" y="645">COLLEGE POINT</text><text x="2336" y="662">BAY TERRACE</text><text x="2463" y="717">LITTLE NECK</text><text x="2069" y="718">EAST ELMHURST</text><text x="1940" y="724">ASTORIA</text><text x="2192" y="723">FLUSHING</text><text x="2256" y="727">MURRAY HILL</text><text x="2194" y="737">DOWNTOWN</text><text x="2194" y="746">FLUSHING</text><text x="2360" y="739">BAYSIDE</text><text x="2050" y="751">JACKSON</text><text x="2050" y="760">HEIGHTS</text><text x="1985" y="764">WOODSIDE</text><text class="s" x="2479" y="776">GLEN OAKS</text><text x="2390" y="804">OAKLAND</text><text x="2390" y="813">GARDENS</text><text x="2064" y="813">ELMHURST</text>
<text x="1985" y="849">MASPETH</text><text x="2330" y="831">FRESH</text><text x="2330" y="840">MEADOWS</text><text x="2445" y="832">BELLEROSE</text><text x="2445" y="841">MANOR</text><text x="2435" y="899">QUEENS VILLAGE</text><text x="2379" y="915">HOLLIS</text><text x="2202" y="935">KEW GARDENS</text><text x="2279" y="942">JAMAICA</text><text x="2191" y="955">RICHMOND HILL</text><text x="1999" y="939">RIDGEWOOD</text><text x="1957" y="971">BUSHWICK</text><text x="2122" y="991">WOODHAVEN</text><text x="2373" y="993">ST. ALBANS</text><text x="2155" y="1025">OZONE PARK</text><text x="2298" y="1025">SOUTH JAMAICA</text><text x="2242" y="1036">SOUTH</text><text x="2242" y="1045">OZONE PARK</text><text x="2427" y="1036">LAURELTON</text><text x="1970" y="1080">BROWNSVILLE</text><text x="2362" y="1080">SPRINGFIELD</text><text x="2362" y="1089">GARDENS</text><text x="2459" y="1108">ROSEDALE</text><text x="2070" y="1103">EAST NEW YORK</text><text x="2159" y="1110">HOWARD BEACH</text><text x="1987" y="1170">CANARSIE</text><text x="2218" y="1258">BROAD CHANNEL</text></g>
<!-- state line, rivers and parkways -->
<g class="lb st"><text transform="translate(1799 541) rotate(-62)">NEW JERSEY</text><text transform="translate(1815 552) rotate(-60)">NEW YORK</text><text transform="translate(1682 769) rotate(-67)">NEW JERSEY</text><text transform="translate(1712 781) rotate(-66)">NEW YORK</text><text transform="translate(1620 1032) rotate(-67)">NEW JERSEY</text><text transform="translate(1633 1038) rotate(-65)">NEW YORK</text></g>
<defs><path id="c1" d="M1236 426C1238 460 1246 480 1247 516"/><path id="c2" d="M1342 820Q1360 801 1400 802"/><path id="c3" d="M2230 639Q2268 656 2312 632"/><path id="c4" d="M2359 675Q2372 706 2408 750"/><path id="c5" d="M2449 472Q2466 496 2530 512"/><path id="c6" d="M2168 856Q2182 896 2250 901"/><path id="c7" d="M2321 885Q2348 862 2410 863"/></defs>
<g class="lb rv"><text transform="translate(1842 473) rotate(-69)">Hudson River</text><text transform="translate(1880 729) rotate(-59)">East River</text><text transform="translate(1958 643) rotate(-53)">East River</text><text transform="translate(1907 632) rotate(-59)">FDR Dr</text><text transform="translate(1905 508) rotate(88)" class="pk">Harlem River Dr</text><text transform="translate(2194 389) rotate(-62)" class="pk">Hutchinson</text><text transform="translate(2375 640) rotate(82)" class="pk">Little Neck Bay</text><text transform="translate(1360 1077) rotate(-60)">Newark Bay</text><text transform="translate(1597 1098) rotate(-78)">Upper Bay</text><text transform="translate(1632 1184) rotate(-69)" class="pk">Belt Pkwy</text><text transform="translate(2469 941) rotate(86)" class="pk">Cross Island Pkwy</text><text transform="translate(2461 1048) rotate(-60)" class="pk">Belt Pkwy</text><text x="2291" y="1076" class="pk">Belt Pkwy</text><text transform="translate(2078 1153) rotate(-58)" class="pk">Belt Pkwy</text>
<g class="s"><text class="s pk"><textPath href="#c1">Garden State Pkwy</textPath></text><text class="s pk"><textPath href="#c2">Passaic River</textPath></text><text class="s pk"><textPath href="#c3">Cross Island Pkwy</textPath></text><text class="s pk"><textPath href="#c4">Cross Island Pkwy</textPath></text><text class="s"><textPath href="#c5">Manhasset Bay</textPath></text><text class="s pk"><textPath href="#c6">Grand Central Pkwy</textPath></text><text class="s pk"><textPath href="#c7">Grand Central Pkwy</textPath></text></g></g>
<!-- clinic pins -->
<use href="#pin" x="1425" y="747" width="24" height="35"/><use href="#pin" x="2109" y="532" width="24" height="35"/><use href="#pin" x="1753" y="815" width="24" height="35"/><use href="#pin" x="1745" y="1016" width="24" height="35"/><use href="#pin" x="1772" y="1061" width="24" height="35"/>
</svg>
     <button class="bare zin position-absolute d-flex justify-content-center" aria-label="Zoom in"><svg width="15" height="15" viewBox="0 0 15 15" stroke="#555" stroke-width="2"><path d="M7.500 0v15M0 7.500h15"/></svg></button>
    </section>
   </main>
  </div>
 </div>
</div>
<svg class="stand" viewBox="1130 1272 616 488" aria-hidden="true">
<defs><linearGradient id="neck" x1="0" y1="0" x2="0" y2="1"><stop offset=".1" stop-color="#d9dada"/><stop offset=".3" stop-color="#d2d3d4"/><stop offset=".6" stop-color="#c4c5c7"/><stop offset="1" stop-color="#c2c3c5"/></linearGradient>
<linearGradient id="side"><stop offset="0" stop-color="#9fa0a6" stop-opacity=".45"/><stop offset=".05" stop-color="#9fa0a6" stop-opacity="0"/><stop offset=".95" stop-color="#9fa0a6" stop-opacity="0"/><stop offset="1" stop-color="#9fa0a6" stop-opacity=".45"/></linearGradient>
<linearGradient id="vfade" x1="0" y1="0" x2="0" y2="1"><stop offset=".25" stop-color="#000"/><stop offset="1" stop-color="#fff"/></linearGradient><mask id="mk"><rect x="1170" y="1312" width="540" height="341" fill="url(#vfade)"/></mask>
<linearGradient id="groove" x1="0" y1="0" x2="0" y2="1"><stop offset="0" stop-color="#c6c7c9"/><stop offset=".3" stop-color="#efefef"/><stop offset=".52" stop-color="#e6e6e6"/><stop offset=".56" stop-color="#777a7d"/><stop offset=".75" stop-color="#a6a7a9"/><stop offset=".88" stop-color="#858789"/><stop offset="1" stop-color="#b3b4b8"/></linearGradient>
<linearGradient id="slope" x1="0" y1="0" x2="0" y2="1"><stop offset="0" stop-color="#b2b3b7"/><stop offset="1" stop-color="#c8c9cb"/></linearGradient>
<linearGradient id="slopeside"><stop offset="0" stop-color="#eceeed"/><stop offset=".07" stop-color="#eceeed" stop-opacity="0"/><stop offset=".93" stop-color="#eceeed" stop-opacity="0"/><stop offset="1" stop-color="#eceeed"/></linearGradient>
<linearGradient id="edge"><stop offset="0" stop-color="#ebecec"/><stop offset=".01" stop-color="#9c9d9f"/><stop offset=".025" stop-color="#f3f3f3"/><stop offset=".08" stop-color="#d6d7d7"/><stop offset=".92" stop-color="#d6d7d7"/><stop offset=".97" stop-color="#f3f3f3"/><stop offset=".98" stop-color="#aaabad"/><stop offset="1" stop-color="#ebecec"/></linearGradient>
<radialGradient id="hole" gradientUnits="userSpaceOnUse" cx="1438" cy="1269" r="80"><stop offset=".75" stop-color="#e9e9e9"/><stop offset=".82" stop-color="#e4e4e4"/><stop offset=".97" stop-color="#cbcccd"/><stop offset="1" stop-color="#b7b8ba"/></radialGradient>
<linearGradient id="holeside"><stop offset="0" stop-color="#777a7d"/><stop offset=".35" stop-color="#888" stop-opacity="0"/><stop offset=".65" stop-color="#888" stop-opacity="0"/><stop offset="1" stop-color="#777a7d"/></linearGradient>
<filter id="soft" x="-10%" y="-10%" width="120%" height="120%"><feGaussianBlur stdDeviation="6"/></filter></defs>
<path d="M1172 1300H1705L1702 1678 1720 1740 1716 1758H1162L1160 1740 1175 1678z" fill="#000" opacity=".16" filter="url(#soft)"/>
<path d="M1171 1272H1705L1702 1656H1175z" fill="url(#neck)"/><path d="M1171 1272H1705L1702 1656H1175z" fill="url(#side)" mask="url(#mk)"/>
<circle cx="1438" cy="1269" r="80" fill="url(#hole)"/><path d="M1372 1312a80 80 0 0 0 132 0h-12a70 70 0 0 1-108 0z" fill="url(#holeside)"/>
<path d="M1175 1680 1158 1735 1175 1738H1703L1720 1735 1703 1680z" fill="#eceeed"/>
<path d="M1175 1679H1702L1708 1737H1170z" fill="url(#slope)"/><path d="M1175 1679H1702L1708 1737H1170z" fill="url(#slopeside)"/>
<rect x="1175" y="1652" width="527" height="28" fill="url(#groove)"/>
<path d="M1160 1735H1718V1752Q1716 1756 1708 1756H1168Q1162 1756 1160 1752z" fill="url(#edge)"/>
<path d="M1167 1756H1215Q1192 1760 1167 1757zM1663 1756H1709V1757Q1685 1760 1663 1756z" fill="#2a2a2c"/>
</svg>
</div>
</body>
</html>
